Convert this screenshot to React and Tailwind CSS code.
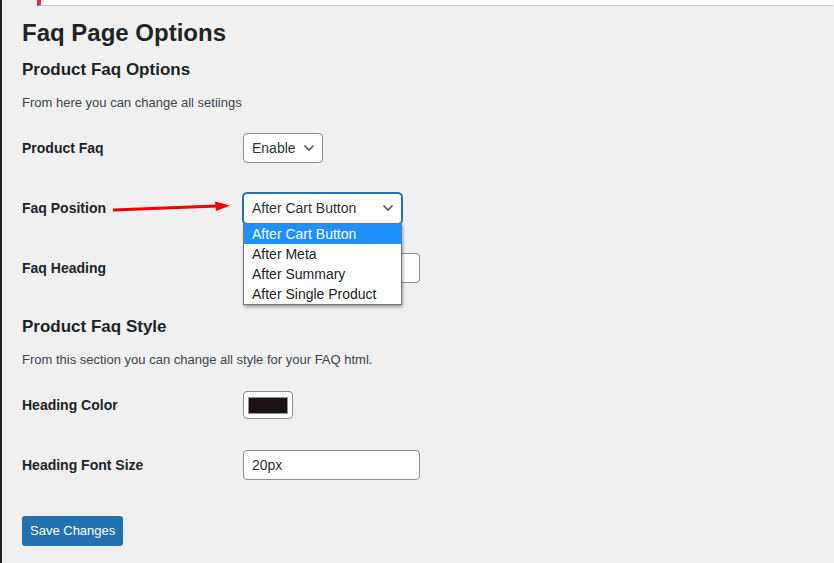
import React from "react";

const font = { fontFamily: '"Segoe UI", "Liberation Sans", Arial, sans-serif' };

function Chevron() {
  return (
    <svg width="12" height="8" viewBox="0 0 12 8" fill="none">
      <path d="M1.5 1.5 L6 6 L10.5 1.5" stroke="#50575e" strokeWidth="1.6" />
    </svg>
  );
}

function Row({ label, children }) {
  return (
    <div className="flex h-[60px] items-center">
      <div className="w-[221px] text-[14px] font-semibold text-[#1d2327]">{label}</div>
      <div className="relative flex items-center">{children}</div>
    </div>
  );
}

export default function App() {
  const options = ["After Cart Button", "After Meta", "After Summary", "After Single Product"];

  return (
    <div
      className="min-h-[563px] w-[834px] overflow-hidden border-l-2 border-[#1d2327] bg-[#f0f0f1] text-[#3c434a]"
      style={font}
    >
      {/* notice bar edge */}
      <div className="ml-[35px] mr-[1px] h-[6px] border-b border-l-4 border-b-[#c3c4c7] border-l-[#d63638] bg-white" />

      <div className="pl-[20px]">
        <h1 className="mt-[12px] text-[24px] font-semibold leading-[30px] text-[#1d2327]">Faq Page Options</h1>
        <h2 className="mt-[11px] text-[17px] font-semibold leading-[22px] text-[#1d2327]">Product Faq Options</h2>
        <p className="mt-[12px] text-[13px] leading-[20px]">From here you can change all setiings</p>

        <div className="mt-[5px]">
          <Row label="Product Faq">
            <div className="flex h-[30px] w-[80px] items-center justify-between rounded-[4px] border border-[#8c8f94] bg-white pl-[8px] pr-[7px] text-[14px] text-[#2c3338]">
              <span>Enable</span>
              <Chevron />
            </div>
          </Row>

          <div className="relative">
            <Row label="Faq Position">
              <div className="flex h-[31px] w-[159px] items-center justify-between rounded-[4px] border border-[#2271b1] bg-white pl-[8px] pr-[7px] text-[14px] text-[#2c3338] shadow-[0_0_0_1px_#2271b1]">
                <span>After Cart Button</span>
                <Chevron />
              </div>
            </Row>
            <svg className="absolute left-[91px] top-[22px]" width="120" height="14" viewBox="0 0 120 14">
              <path d="M0 10 L104 6" stroke="#f20000" strokeWidth="3" />
              <path d="M102 1.5 L117 5.5 L103 11 Z" fill="#f20000" />
            </svg>
            <div className="absolute left-[221px] top-[45px] z-10 w-[159px] border border-[#767676] bg-white text-[14px] leading-[20px] text-[#1d2327] shadow-[1px_2px_3px_rgba(0,0,0,0.35)]">
              {options.map((o, i) => (
                <div key={o} className={i === 0 ? "bg-[#1e90ff] pl-[8px] text-white" : "pl-[8px]"}>
                  {o}
                </div>
              ))}
            </div>
          </div>

          <Row label="Faq Heading">
            <div className="h-[30px] w-[177px] rounded-[4px] border border-[#8c8f94] bg-white" />
          </Row>
        </div>

        <h2 className="mt-[18px] text-[17px] font-semibold leading-[22px] text-[#1d2327]">Product Faq Style</h2>
        <p className="mt-[12px] text-[13px] leading-[20px]">From this section you can change all style for your FAQ html.</p>

        <div className="mt-[5px]">
          <Row label="Heading Color">
            <div className="flex h-[28px] w-[50px] items-center justify-center rounded-[4px] border border-[#8c8f94] bg-white">
              <div className="h-[17px] w-[40px] border border-[#8c8f94] bg-[#1b1213]" />
            </div>
          </Row>
          <Row label="Heading Font Size">
            <div className="flex h-[30px] w-[177px] items-center rounded-[4px] border border-[#8c8f94] bg-white pl-[8px] text-[14px] text-[#2c3338]">
              20px
            </div>
          </Row>
        </div>

        <button className="mt-[21px] h-[30px] rounded-[3px] bg-[#2271b1] px-[8px] text-[13px] text-white">
          Save Changes
        </button>
      </div>
    </div>
  );
}
